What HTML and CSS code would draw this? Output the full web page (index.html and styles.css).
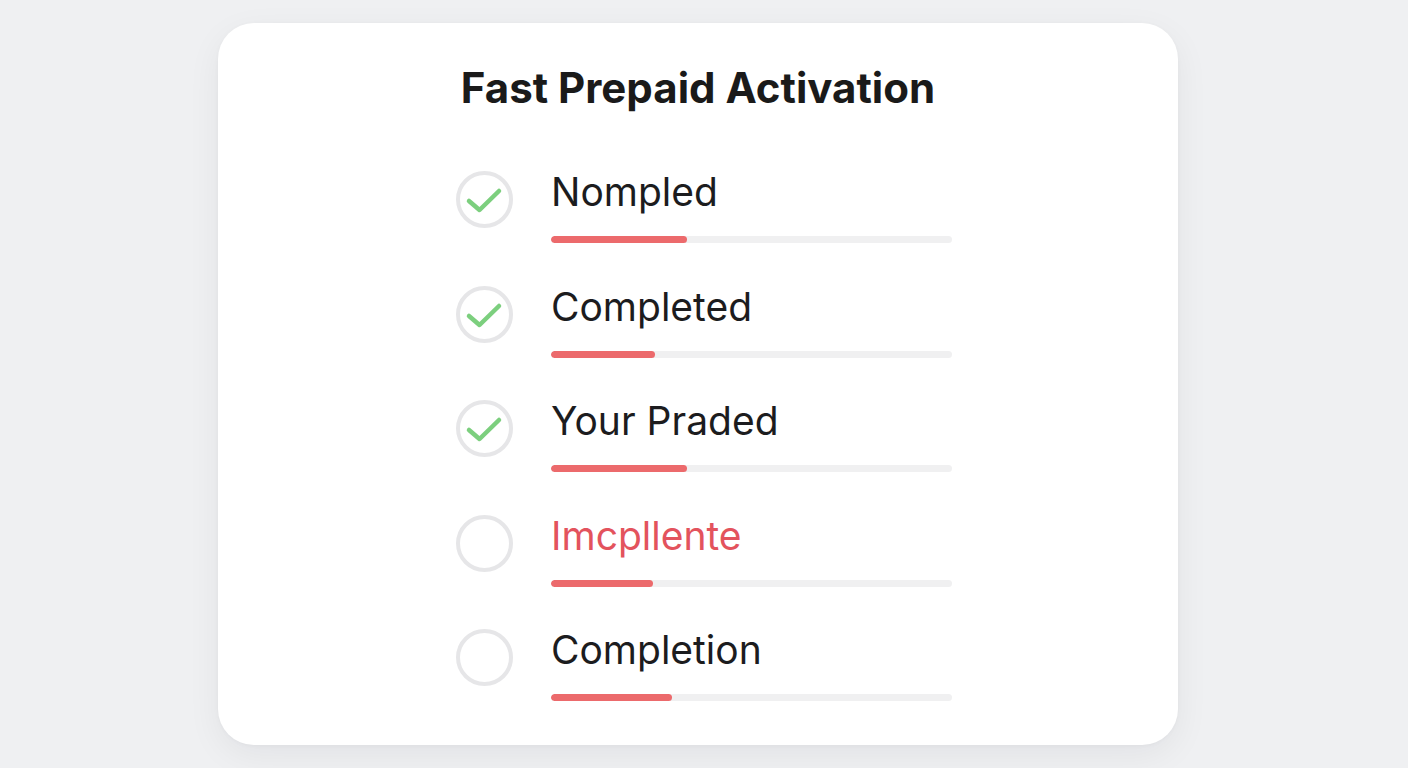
FILE: index.html
```html
<!DOCTYPE html>
<html lang="en">
<head>
<meta charset="utf-8">
<title>Fast Prepaid Activation</title>
<link rel="stylesheet" href="styles.css">
</head>
<body>
<main class="card">
  <h1 class="title">Fast Prepaid Activation</h1>
  <ul class="steps">
    <li class="step">
      <span class="status done">
        <svg viewBox="0 0 57 57" width="57" height="57"><path d="M13 30 L23.5 39 L43 20" /></svg>
      </span>
      <div class="body">
        <span class="label">Nompled</span>
        <div class="track"><div class="fill" style="width:136px"></div></div>
      </div>
    </li>
    <li class="step">
      <span class="status done">
        <svg viewBox="0 0 57 57" width="57" height="57"><path d="M13 30 L23.5 39 L43 20" /></svg>
      </span>
      <div class="body">
        <span class="label">Completed</span>
        <div class="track"><div class="fill" style="width:104px"></div></div>
      </div>
    </li>
    <li class="step">
      <span class="status done">
        <svg viewBox="0 0 57 57" width="57" height="57"><path d="M13 30 L23.5 39 L43 20" /></svg>
      </span>
      <div class="body">
        <span class="label">Your Praded</span>
        <div class="track"><div class="fill" style="width:136px"></div></div>
      </div>
    </li>
    <li class="step">
      <span class="status"></span>
      <div class="body">
        <span class="label alert">Imcpllente</span>
        <div class="track"><div class="fill" style="width:102px"></div></div>
      </div>
    </li>
    <li class="step">
      <span class="status"></span>
      <div class="body">
        <span class="label">Completion</span>
        <div class="track"><div class="fill" style="width:121px"></div></div>
      </div>
    </li>
  </ul>
</main>
</body>
</html>
```
FILE: styles.css
```css
* { box-sizing: border-box; }
html, body {
  margin: 0;
  padding: 0;
}
body {
  width: 1408px;
  height: 768px;
  overflow: hidden;
  background: #eff0f2;
  font-family: Inter, "Liberation Sans", Arial, sans-serif;
  color: #1c1c1e;
}
.card {
  margin: 23px 0 0 218px;
  width: 960px;
  height: 722px;
  background: #ffffff;
  border-radius: 36px;
  box-shadow: 0 10px 34px rgba(20, 24, 40, 0.06), 0 1px 4px rgba(20, 24, 40, 0.03);
  padding-top: 41px;
  display: flex;
  flex-direction: column;
  align-items: center;
}
.title {
  margin: 0;
  font-size: 42px;
  line-height: 48px;
  font-weight: 700;
  letter-spacing: 0;
  color: #1a1a1a;
}
.steps {
  list-style: none;
  margin: 56px 0 0 12px;
  padding: 0;
  width: 496px;
  display: flex;
  flex-direction: column;
  gap: 39.5px;
}
.step {
  display: flex;
  align-items: flex-start;
  gap: 38px;
}
.status {
  flex: none;
  width: 57px;
  height: 57px;
  margin-top: 3px;
  border: 4px solid #e6e6e8;
  border-radius: 50%;
  position: relative;
}
.status svg {
  position: absolute;
  left: -4px;
  top: -4px;
  fill: none;
  stroke: #7ccf7e;
  stroke-width: 4.5;
  stroke-linecap: round;
  stroke-linejoin: round;
}
.body {
  flex: 1;
  display: flex;
  flex-direction: column;
  gap: 20px;
}
.label {
  font-size: 39px;
  line-height: 48px;
  font-weight: 400;
  color: #1c1c1e;
}
.label.alert {
  color: #e3535d;
}
.track {
  height: 7px;
  border-radius: 4px;
  background: #f0f0f1;
  overflow: hidden;
}
.fill {
  height: 100%;
  border-radius: 4px;
  background: #ec6a6c;
}
```
